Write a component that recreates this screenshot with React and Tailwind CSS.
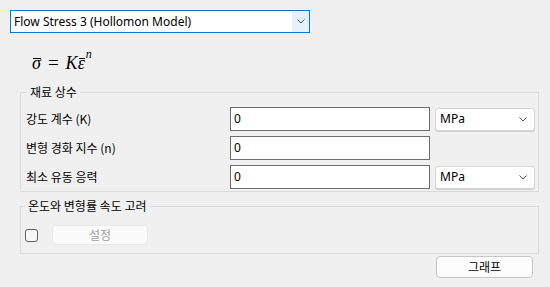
import React from 'react';

const ui = { fontFamily: '"Noto Sans", "Noto Sans CJK KR", sans-serif' };
const kr = { fontFamily: '"Noto Sans CJK KR", "Noto Sans", sans-serif' };

const Chevron = ({ className = '' }) => (
  <svg viewBox="0 0 8 5" className={className} fill="none" stroke="#505050" strokeWidth="1">
    <path d="M0.5 0.5 L4 4 L7.5 0.5" />
  </svg>
);

const UnitSelect = () => (
  <div className="ml-[5px] flex h-[23px] w-[100px] items-center justify-between rounded-[3px] border border-[#d6d6d6] bg-white pl-[4px] pr-[7px] text-[12px] text-black shadow-[0_1px_0_#cfcfcf]">
    <span>MPa</span>
    <Chevron className="h-[5px] w-[8px]" />
  </div>
);

const Field = ({ label, unit }) => (
  <div className="flex h-[24px] items-center">
    <div className="w-[209px] pl-[5px] text-[12px] text-black leading-none" style={kr}>
      {label}
    </div>
    <div className="flex h-[24px] w-[200px] items-center border border-[#6e6e6e] bg-white pl-[3px] text-[12px] text-black">
      0
    </div>
    {unit && <UnitSelect />}
  </div>
);

// letter with a bar over it
const Bar = ({ children }) => (
  <span className="relative inline-block">
    <span className="absolute left-[1px] right-0 top-[5px] h-px bg-black" />
    {children}
  </span>
);

export default function App() {
  return (
    <div className="flex h-[287px] w-[550px] flex-col overflow-hidden bg-[#f0f0f0]" style={ui}>
      {/* model selector */}
      <div className="ml-[10px] mt-[10px] flex h-[23px] w-[300px] items-stretch border border-[#0078d7] bg-white">
        <div className="flex flex-1 items-center pl-[3px] text-[12px] text-black">
          Flow Stress 3 (Hollomon Model)
        </div>
        <div className="flex w-[17px] items-center justify-center bg-[#e5f1fb]">
          <Chevron className="h-[5px] w-[8px]" />
        </div>
      </div>

      {/* formula */}
      <div
        className="ml-[32px] mt-[18px] flex h-[22px] items-end text-[18px] leading-[20px] text-black italic"
        style={{ fontFamily: '"Liberation Serif", "DejaVu Serif", serif' }}
      >
        <Bar>σ</Bar>
        <span className="mx-[7px] not-italic text-[19px]">=</span>
        <span>K</span>
        <Bar>ε</Bar>
        <span className="relative -top-[9px] ml-[1px] text-[12px]">n</span>
      </div>

      {/* material constants */}
      <fieldset className="ml-[20px] mr-[11px] mt-[11px] border border-[#dcdcdc] px-0 pb-[2px]">
        <legend className="ml-[6px] px-[3px] text-[12px] leading-[16px] text-black" style={kr}>
          재료 상수
        </legend>
        <div className="mt-[7px] flex flex-col gap-[5px]">
          <Field label="강도 계수 (K)" unit />
          <Field label="변형 경화 지수 (n)" />
          <Field label="최소 유동 응력" unit />
        </div>
      </fieldset>

      {/* temperature / strain rate */}
      <fieldset className="ml-[20px] mr-[11px] mt-[6px] border border-[#dcdcdc] px-0 pb-[8px]">
        <legend className="ml-[5px] px-[2px] text-[12px] leading-[16px] text-black" style={kr}>
          온도와 변형률 속도 고려
        </legend>
        <div className="mt-[11px] flex items-center">
          <div className="ml-[4px] h-[13px] w-[13px] rounded-[3px] border border-[#5f5f5f] bg-[#f7f7f7]" />
          <div
            className="ml-[14px] flex h-[20px] w-[96px] items-center justify-center rounded-[4px] border border-[#e8e8e8] bg-[#fbfbfb] text-[12px] text-[#a0a0a0]"
            style={kr}
          >
            설정
          </div>
        </div>
      </fieldset>

      <div className="mr-[17px] mt-[2px] flex justify-end">
        <div
          className="flex h-[22px] w-[97px] items-center justify-center rounded-[4px] border border-[#c6c6c6] bg-[#fdfdfd] text-[12px] text-black"
          style={kr}
        >
          그래프
        </div>
      </div>
    </div>
  );
}
